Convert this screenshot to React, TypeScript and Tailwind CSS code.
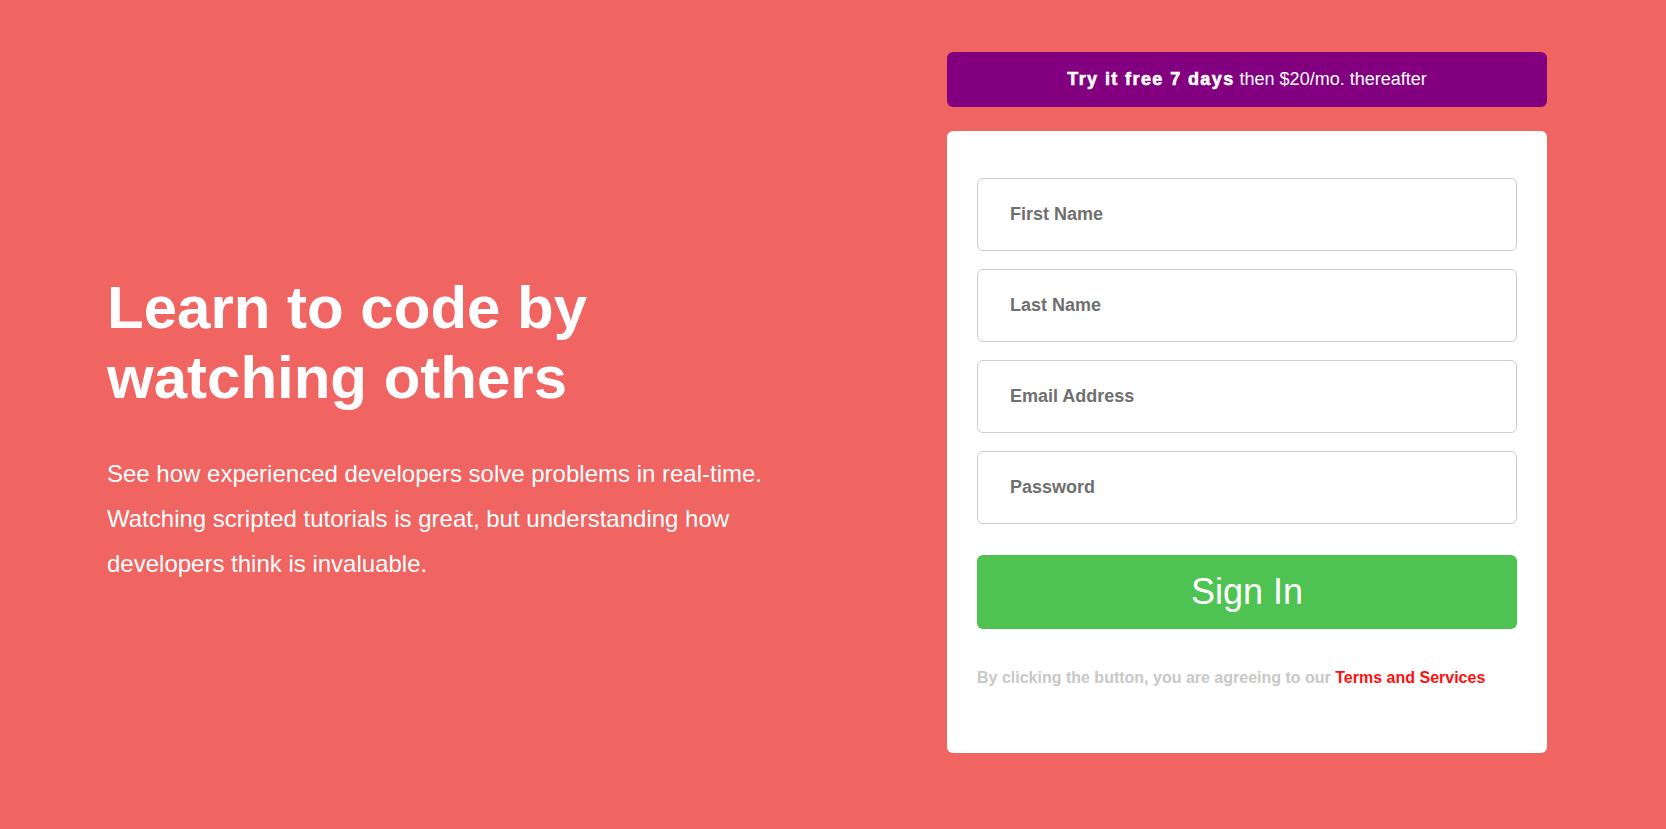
import React from 'react';

const fields = ['First Name', 'Last Name', 'Email Address', 'Password'];

const App: React.FC = () => {
  return (
    <div className="min-h-[829px] w-full bg-[#f06462] font-['Liberation_Sans',Arial,sans-serif] flex items-start">
      {/* left: pitch */}
      <div className="w-[947px] shrink-0 pl-[107px] pt-[273px] text-white">
        <h1 className="text-[60px] leading-[70px] font-bold max-w-[700px]">
          Learn to code by watching others
        </h1>
        <p className="mt-[38px] text-[24px] leading-[45px] max-w-[690px]">
          See how experienced developers solve problems in real-time. Watching scripted tutorials is great, but
          understanding how developers think is invaluable.
        </p>
      </div>

      {/* right: signup */}
      <div className="w-[600px] shrink-0 mt-[52px]">
        <div className="h-[55px] rounded-[6px] bg-[#820080] flex items-center justify-center text-white text-[18px]">
          <span className="font-bold tracking-[1.4px] [-webkit-text-stroke:0.6px_white]">Try it free 7 days</span>
          <span className="ml-[5px]">then $20/mo. thereafter</span>
        </div>

        <form
          className="mt-[24px] h-[622px] rounded-[6px] bg-white pt-[47px] px-[30px]"
          onSubmit={(e) => e.preventDefault()}
        >
          <div className="flex flex-col gap-[18px]">
            {fields.map((f) => (
              <input
                key={f}
                type={f === 'Password' ? 'password' : 'text'}
                placeholder={f}
                className="h-[73px] w-full rounded-[6px] border border-[#cdcdcd] px-[32px] text-[18px] font-bold text-[#333] placeholder:text-[#6f6f6f] outline-none"
              />
            ))}
          </div>

          <button
            type="submit"
            className="mt-[31px] h-[74px] w-full rounded-[6px] bg-[#4ec352] text-white text-[36px]"
          >
            Sign In
          </button>

          <p className="mt-[37px] text-[16px] font-bold text-[#c8c8c8]">
            By clicking the button, you are agreeing to our{' '}
            <a href="#" className="text-[#ff1010]">
              Terms and Services
            </a>
          </p>
        </form>
      </div>
    </div>
  );
};

export default App;
